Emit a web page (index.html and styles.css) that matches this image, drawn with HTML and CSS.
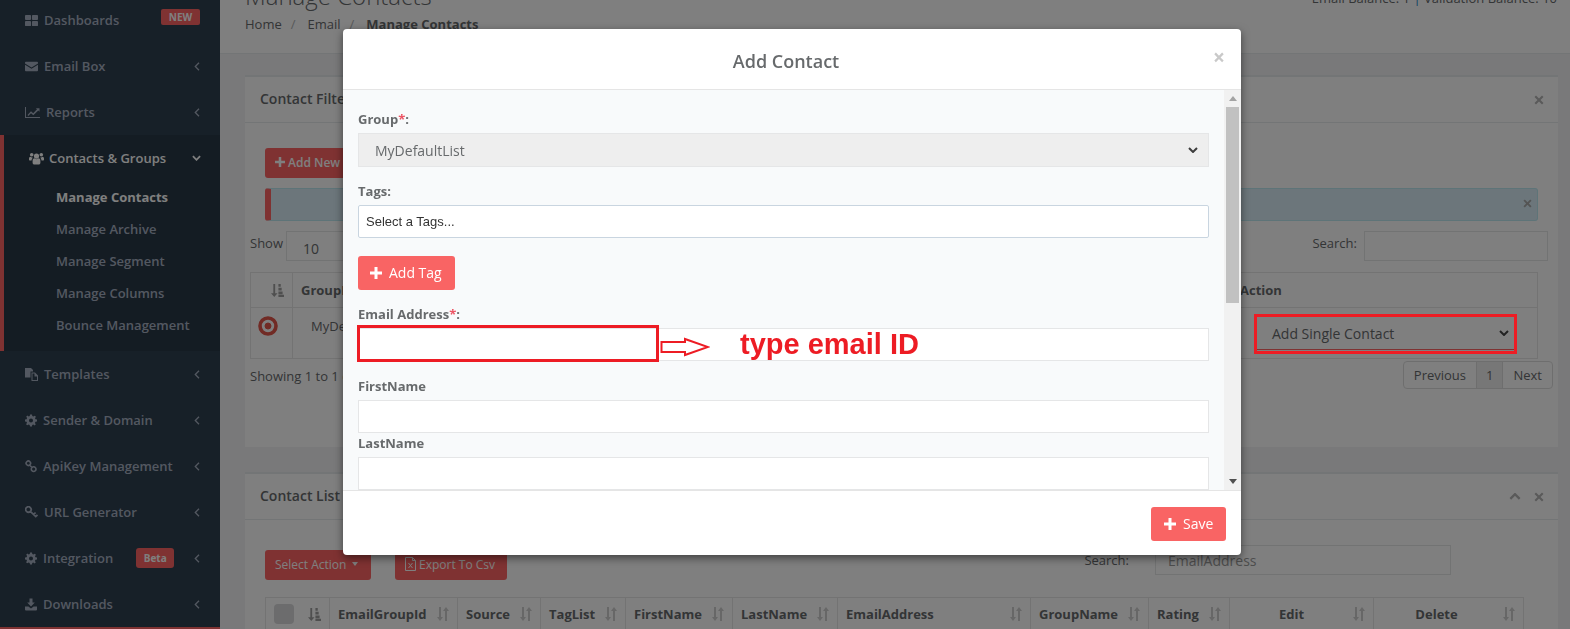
FILE: index.html
```html
<!DOCTYPE html>
<html lang="en">
<head>
<meta charset="utf-8">
<title>Manage Contacts</title>
<link rel="stylesheet" href="styles.css">
</head>
<body>
<svg class="defs" width="0" height="0" aria-hidden="true">
  <symbol id="i-th" viewBox="0 0 14 12"><path d="M0 1a1 1 0 0 1 1-1h4.5a1 1 0 0 1 1 1v3.4a1 1 0 0 1-1 1H1a1 1 0 0 1-1-1zM7.5 1a1 1 0 0 1 1-1H13a1 1 0 0 1 1 1v3.4a1 1 0 0 1-1 1H8.500a1 1 0 0 1-1-1zM0 7.600a1 1 0 0 1 1-1h4.500a1 1 0 0 1 1 1V11a1 1 0 0 1-1 1H1a1 1 0 0 1-1-1zM7.500 7.600a1 1 0 0 1 1-1H13a1 1 0 0 1 1 1V11a1 1 0 0 1-1 1H8.500a1 1 0 0 1-1-1z"/></symbol>
  <symbol id="i-mail" viewBox="0 0 14 10"><path d="M1 0h12a1 1 0 0 1 1 1v.7L7 6 0 1.700V1a1 1 0 0 1 1-1zM0 3.200 7 7.500l7-4.300V9a1 1 0 0 1-1 1H1a1 1 0 0 1-1-1z"/></symbol>
  <symbol id="i-chart" viewBox="0 0 15 11"><path d="M0 0h1v10h14v1H0zM2.500 8 6 4.300l2.200 2L12 2.300 10.800 1.200H14.500V4.800L13.300 3.600 8.300 8.300 6 6.300 3.300 9z"/></symbol>
  <symbol id="i-users" viewBox="0 0 15 12"><circle cx="7.500" cy="3.600" r="2.600"/><circle cx="2.700" cy="2.200" r="1.800"/><circle cx="12.300" cy="2.200" r="1.800"/><path d="M3.600 8.200c0-1.800 1-2.500 2-2.500l1.900 1 1.900-1c1 0 2 .7 2 2.500v2c0 1.200-.8 1.800-1.800 1.800H5.400c-1 0-1.800-.6-1.800-1.800zM0 6.200c0-1.200.7-1.900 1.500-1.900l1.300.6c.4 0 .7.100 1 .3C3 6 2.600 6.800 2.500 8H.9C.4 8 0 7.600 0 7zM15 6.200c0-1.200-.7-1.900-1.500-1.900l-1.300.6c-.4 0-.7.100-1 .3.800.800 1.200 1.600 1.300 2.800h1.600c.5 0 .9-.4.900-1z"/></symbol>
  <symbol id="i-files" viewBox="0 0 13 13"><path d="M0 0h6l2 2v1.500H5.500V9.500H0zM6.500 4.500H10l3 3V13H6.500zM7.500 5.500V12H12V8.500H9.500V5.500z" fill-rule="evenodd"/></symbol>
  <symbol id="i-cog" viewBox="0 0 12 12"><path fill-rule="evenodd" d="M5 0h2l.3 1.600 1.100.5L9.800 1.200l1.100 1.100-.9 1.400.5 1.100L12 5v2l-1.600.3-.5 1.100.9 1.400-1.100 1.100-1.400-.9-1.100.5L7 12H5l-.3-1.600-1.100-.5-1.400.9-1.100-1.100.9-1.400-.5-1.100L0 7V5l1.600-.3.500-1.100-.9-1.400 1.100-1.100 1.400.9 1.100-.5zM6 4a2 2 0 1 0 0 4 2 2 0 0 0 0-4z"/></symbol>
  <symbol id="i-link" viewBox="0 0 12 12"><path fill="none" stroke="currentColor" stroke-width="1.600" d="M1.800 1.200a2.200 2.200 0 0 1 3.100 0 2.200 2.200 0 0 1 0 3.100 2.200 2.200 0 0 1-3.100 0 2.200 2.200 0 0 1 0-3.100zM7 7a2.300 2.300 0 0 1 3.300 0 2.300 2.300 0 0 1 0 3.300A2.300 2.300 0 0 1 7 10.300 2.300 2.300 0 0 1 7 7zM4.500 4.500 7.300 7.300"/></symbol>
  <symbol id="i-key" viewBox="0 0 12 12"><path fill="none" stroke="currentColor" stroke-width="1.600" d="M1.400 1.400a2.500 2.500 0 0 1 3.500 0 2.500 2.500 0 0 1 0 3.500 2.500 2.500 0 0 1-3.500 0 2.500 2.500 0 0 1 0-3.500zM4.900 4.900l5.600 5.400M8 7.500l1.800-1.400M10 9.600l1.500-1.300"/></symbol>
  <symbol id="i-down" viewBox="0 0 12 12"><path d="M4.500 0h3v4h2.300L6 8 2.200 4h2.300zM0 8h3.400L6 10l2.600-2H12v3a1 1 0 0 1-1 1H1a1 1 0 0 1-1-1z"/></symbol>
  <symbol id="i-left" viewBox="0 0 6 9"><path fill="none" stroke="currentColor" stroke-width="1.300" d="M5 .8 1.300 4.500 5 8.200"/></symbol>
  <symbol id="i-chev" viewBox="0 0 10 6"><path fill="none" stroke="currentColor" stroke-width="2" d="M1 1l4 4 4-4"/></symbol>
  <symbol id="i-plus" viewBox="0 0 12 12"><path d="M4.500 0h3v4.500H12v3H7.500V12h-3V7.500H0v-3h4.500z"/></symbol>
  <symbol id="i-x" viewBox="0 0 10 10"><path d="M2 .5 5 3.500 8 .5 9.500 2l-3 3 3 3L8 9.500l-3-3-3 3L.5 8l3-3-3-3z"/></symbol>
  <symbol id="i-amount" viewBox="0 0 14 14"><path d="M2.500 0h2v10H7l-3.500 4L0 10h2.500zM8 0h2.500v3H8zM8 4h3.500v3H8zM8 8h4.500v3H8zM8 11.500h6V14H8z"/></symbol>
  <symbol id="i-sort" viewBox="0 0 12 14"><path d="M2 0h2v10h2l-3 4-3-4h2zM8 14h2V4h2L9 0 6 4h2z"/></symbol>
  <symbol id="i-xls" viewBox="0 0 11 14"><path fill="none" stroke="currentColor" d="M.5.500h7l3 3v10H.500zM7.500.500v3h3M3.500 6l4 5M7.500 6l-4 5"/></symbol>
</svg>

<div class="app">
  <aside class="sidebar">
    <nav class="nav">
      <a class="nav-item"><svg class="ico w13"><use href="#i-th"/></svg><span>Dashboards</span><b class="badge badge-new">NEW</b></a>
      <a class="nav-item"><svg class="ico w13"><use href="#i-mail"/></svg><span>Email Box</span><svg class="arrow"><use href="#i-left"/></svg></a>
      <a class="nav-item"><svg class="ico w15"><use href="#i-chart"/></svg><span>Reports</span><svg class="arrow"><use href="#i-left"/></svg></a>
      <div class="nav-group">
        <a class="nav-item nav-open"><svg class="ico w14"><use href="#i-users"/></svg><span>Contacts &amp; Groups</span><svg class="arrow-down"><use href="#i-chev"/></svg></a>
        <a class="sub sub-active">Manage Contacts</a>
        <a class="sub">Manage Archive</a>
        <a class="sub">Manage Segment</a>
        <a class="sub">Manage Columns</a>
        <a class="sub">Bounce Management</a>
      </div>
      <a class="nav-item"><svg class="ico w13"><use href="#i-files"/></svg><span>Templates</span><svg class="arrow"><use href="#i-left"/></svg></a>
      <a class="nav-item"><svg class="ico w12"><use href="#i-cog"/></svg><span>Sender &amp; Domain</span><svg class="arrow"><use href="#i-left"/></svg></a>
      <a class="nav-item"><svg class="ico w12"><use href="#i-link"/></svg><span>ApiKey Management</span><svg class="arrow"><use href="#i-left"/></svg></a>
      <a class="nav-item"><svg class="ico w13"><use href="#i-key"/></svg><span>URL Generator</span><svg class="arrow"><use href="#i-left"/></svg></a>
      <a class="nav-item"><svg class="ico w12"><use href="#i-cog"/></svg><span>Integration</span><b class="badge badge-beta">Beta</b><svg class="arrow"><use href="#i-left"/></svg></a>
      <a class="nav-item"><svg class="ico w12"><use href="#i-down"/></svg><span>Downloads</span><svg class="arrow"><use href="#i-left"/></svg></a>
      <div class="nav-next"></div>
    </nav>
  </aside>

  <main class="main">
    <header class="page-head">
      <div>
        <h1 class="title">Manage Contacts</h1>
        <ol class="crumbs"><li>Home</li><li class="sep">/</li><li>Email</li><li class="sep">/</li><li class="crumb-now">Manage Contacts</li></ol>
      </div>
      <div class="balance">Email Balance: 1 <span class="bar">|</span> Validation Balance: 10</div>
    </header>

    <section class="panel panel-first">
      <div class="panel-head"><h2>Contact Filter</h2><svg class="tool tool-x"><use href="#i-x"/></svg></div>
      <div class="panel-body">
        <button class="btn"><svg class="btn-plus"><use href="#i-plus"/></svg>Add New Contact</button>
        <div class="alert"><svg class="alert-x"><use href="#i-x"/></svg></div>
        <div class="dt">
          <div class="dt-top">
            <label class="show">Show <span class="len">10</span></label>
            <label class="search">Search: <span class="search-box"></span></label>
          </div>
          <table class="tbl tbl-one">
            <thead><tr>
              <th class="c-sort"><svg class="sort-a"><use href="#i-amount"/></svg></th>
              <th class="c-group">GroupName</th>
              <th class="c-action">Action</th>
            </tr></thead>
            <tbody><tr>
              <td class="c-sort"><svg class="target" viewBox="0 0 20 20"><circle cx="10" cy="10" r="8" fill="none" stroke-width="3.600"/><circle cx="10" cy="10" r="3"/></svg></td>
              <td class="c-group-val">MyDefaultList</td>
              <td class="c-select"><div class="fake-select"><span>Add Single Contact</span><svg class="chev"><use href="#i-chev"/></svg></div></td>
            </tr></tbody>
          </table>
          <div class="dt-foot">
            <span>Showing 1 to 1 of 1 entries</span>
            <div class="pager"><span>Previous</span><span class="pager-now">1</span><span>Next</span></div>
          </div>
        </div>
      </div>
    </section>

    <section class="panel panel-second">
      <div class="panel-head"><h2>Contact List</h2><svg class="tool tool-up"><use href="#i-chev"/></svg><svg class="tool tool-x"><use href="#i-x"/></svg></div>
      <div class="panel-body">
        <div class="toolbar">
          <button class="btn btn-action">Select Action <i class="caret"></i></button>
          <button class="btn btn-export"><svg class="xls"><use href="#i-xls"/></svg>Export To Csv</button>
          <label class="search2">Search: <span class="search2-box">EmailAddress</span></label>
        </div>
        <table class="tbl tbl-two">
          <thead><tr>
            <th class="w-check"><div class="th-in"><i class="check"></i><svg class="sort-a"><use href="#i-amount"/></svg></div></th>
            <th class="w-id"><div class="th-in"><span>EmailGroupId</span><svg class="sort"><use href="#i-sort"/></svg></div></th>
            <th class="w-source"><div class="th-in"><span>Source</span><svg class="sort"><use href="#i-sort"/></svg></div></th>
            <th class="w-tag"><div class="th-in"><span>TagList</span><svg class="sort"><use href="#i-sort"/></svg></div></th>
            <th class="w-first"><div class="th-in"><span>FirstName</span><svg class="sort"><use href="#i-sort"/></svg></div></th>
            <th class="w-last"><div class="th-in"><span>LastName</span><svg class="sort"><use href="#i-sort"/></svg></div></th>
            <th class="w-email"><div class="th-in"><span>EmailAddress</span><svg class="sort"><use href="#i-sort"/></svg></div></th>
            <th class="w-gname"><div class="th-in"><span>GroupName</span><svg class="sort"><use href="#i-sort"/></svg></div></th>
            <th class="w-rating"><div class="th-in"><span>Rating</span><svg class="sort"><use href="#i-sort"/></svg></div></th>
            <th class="w-edit"><div class="th-in th-mid"><span>Edit</span><svg class="sort"><use href="#i-sort"/></svg></div></th>
            <th class="w-delete"><div class="th-in th-mid"><span>Delete</span><svg class="sort"><use href="#i-sort"/></svg></div></th>
          </tr></thead>
        </table>
      </div>
    </section>
  </main>
</div>

<div class="backdrop"></div>

<div class="modal" role="dialog">
  <div class="modal-head"><h3>Add Contact</h3><span class="close">&times;</span></div>
  <div class="modal-body">
    <form class="form">
      <label class="lbl">Group<em>*</em>:</label>
      <div class="fake-input is-disabled"><span>MyDefaultList</span><svg class="chev"><use href="#i-chev"/></svg></div>
      <label class="lbl lbl-tags">Tags:</label>
      <div class="fake-input tags-input">Select a Tags...</div>
      <button type="button" class="btn-solid btn-tag"><svg class="plus"><use href="#i-plus"/></svg>Add Tag</button>
      <label class="lbl lbl-email">Email Address<em>*</em>:</label>
      <input class="field" type="text">
      <label class="lbl lbl-first">FirstName</label>
      <input class="field field-first" type="text">
      <label class="lbl lbl-last">LastName</label>
      <input class="field" type="text">
    </form>
    <div class="scrollbar">
      <div class="sb-btn"><i class="sb-up"></i></div>
      <div class="sb-track"><div class="sb-thumb"></div></div>
      <div class="sb-btn"><i class="sb-down"></i></div>
    </div>
  </div>
  <div class="modal-foot"><button type="button" class="btn-solid btn-save"><svg class="plus"><use href="#i-plus"/></svg>Save</button></div>
</div>

<div class="note note-email"></div>
<svg class="note-arrow" viewBox="0 0 50 20"><path d="M1.500 5H25V2l23 8-23 8v-3H1.500z"/></svg>
<div class="note-text">type email ID</div>
<div class="note note-action"></div>
</body>
</html>
```

FILE: styles.css
```css
* { box-sizing: border-box; }
html, body { margin: 0; height: 629px; overflow: hidden; }
body { font-family: "Open Sans", "Liberation Sans", sans-serif; font-size: 13px; color: #676a6c; background: #f3f3f4; }
.defs { position: absolute; }
.app { display: flex; height: 629px; overflow: hidden; }

/* sidebar */
.sidebar { width: 220px; flex: none; background: #2f4050; height: 629px; overflow: hidden; }
.nav { margin-top: -3px; display: flex; flex-direction: column; }
.nav-item { display: flex; align-items: center; height: 46px; padding-left: 25px; padding-right: 20px; color: #a7b1c2; font-weight: 600; font-size: 13px; }
.ico { height: 13px; fill: currentColor; margin-right: 6px; flex: none; overflow: visible; }
.w12 { width: 12px; }
.w13 { width: 13px; }
.w14 { width: 14px; }
.w15 { width: 15px; }
.arrow { width: 6px; height: 9px; margin-left: auto; color: #a7b1c2; flex: none; }
.arrow-down { width: 9px; height: 6px; margin-left: auto; flex: none; }
.badge { font-size: 10px; font-weight: 700; color: #fff; background: #ff6565; border-radius: 2px; display: flex; align-items: center; justify-content: center; }
.badge-new { width: 39px; height: 16px; margin-left: auto; margin-top: -6px; }
.badge-beta { width: 38px; height: 20px; margin-left: 23px; border-radius: 3px; }
.nav-group { background: #293846; border-left: 4px solid #ff6565; height: 216px; }
.nav-open { color: #fff; padding-right: 19px; }
.nav-open .ico { width: 15px; margin-right: 5px; }
.sub { display: block; height: 32px; line-height: 32px; padding-left: 52px; color: #a7b1c2; font-weight: 600; }
.sub-active { color: #fff; font-weight: 700; }
.nav-next { border-top: 2px solid #ff6565; height: 10px; }

/* page */
.main { flex: 1; min-width: 0; }
.page-head { margin-top: -19px; background: #fff; border-bottom: 1px solid #e7eaec; padding: 0 13px 19px 25px; display: flex; justify-content: space-between; height: 73px; }
.title { margin: 0; font-size: 24px; font-weight: 300; line-height: 30px; }
.crumbs { list-style: none; margin: 3px 0 0; padding: 0; display: flex; line-height: 20px; gap: 9px; }
.sep { color: #b0b2b4; margin-right: 3px; }
.crumb-now { font-weight: 700; }
.balance { margin-top: 7px; line-height: 20px; }
.bar { color: #1c84c6; }

.panel { margin: 0 12px 0 25px; background: #fff; border-top: 2px solid #e7eaec; }
.panel-first { margin-top: 21px; height: 372px; }
.panel-second { margin-top: 25px; }
.panel-head { height: 46px; border-bottom: 1px solid #e7eaec; display: flex; align-items: center; padding: 0 14px 0 15px; }
.panel-head h2 { margin: 0 auto 0 0; font-size: 14px; font-weight: 600; position: relative; top: -1px; }
.tool { fill: currentColor; color: #b4b4b4; }
.tool-x { width: 10px; height: 10px; margin-left: 13px; }
.tool-up { width: 12px; height: 7px; transform: rotate(180deg); }
.panel-body { padding: 25px 20px 0; }
.btn { display: flex; align-items: center; height: 30px; padding: 0 10px 2px; border: 0; border-radius: 3px; background: #ff6565; color: #fff; font: 600 12px "Open Sans", sans-serif; }
.btn-plus { width: 10px; height: 10px; fill: #fff; margin-right: 3px; }
.alert { position: relative; height: 33px; margin-top: 10px; background: #d9edf7; border: 1px solid #bce8f1; border-left: 6px solid #ff6565; border-radius: 3px; }
.alert-x { position: absolute; right: 5px; top: 10px; width: 9px; height: 9px; fill: #a8a8a8; }
.dt { margin: 10px -15px 0; }
.dt-top { display: flex; justify-content: space-between; height: 30px; padding-right: 5px; }
.show, .search { display: flex; align-items: flex-start; line-height: 25px; }
.show { gap: 3px; }
.len { display: block; width: 190px; height: 30px; line-height: 33px; border: 1px solid #e5e6e7; padding-left: 16px; font-size: 14px; }
.search { gap: 7px; }
.search-box { display: block; width: 184px; height: 30px; border: 1px solid #e5e6e7; background: #fff; }
.tbl { border-collapse: collapse; table-layout: fixed; }
.tbl th, .tbl td { border: 1px solid #e7e7e7; padding: 0; }
.tbl-one { width: 1288px; margin-top: 11px; }
.tbl-one thead tr { height: 35px; }
.tbl-one tbody tr { height: 51px; }
.tbl-one th { font-size: 13px; font-weight: 700; text-align: left; padding-left: 8px; }
.tbl-one td { vertical-align: top; padding-top: 8px; }
.c-sort { width: 42px; text-align: center; }
.tbl-one th.c-sort { padding-left: 20px; }
.tbl-one th.c-action { width: 308px; padding-left: 10px; }
.tbl-one .c-group-val { padding-left: 18px; line-height: 20px; }
.sort-a { width: 13px; height: 13px; fill: #9f9f9f; display: block; }
.target { width: 20px; height: 20px; stroke: #e3564a; fill: #e3564a; display: block; margin: 0 auto 0 7px; }
.tbl-one .c-select { padding: 9px 0 0 26px; }
.fake-select { display: flex; align-items: center; justify-content: space-between; width: 259px; height: 33px; padding: 0 6px 0 16px; font-size: 14px; border-bottom: 1px solid #ff6565; }
.chev { width: 10px; height: 6px; color: #444; flex: none; }
.dt-foot { display: flex; justify-content: space-between; align-items: flex-start; margin-top: 2px; line-height: 30px; }
.pager { display: flex; height: 28px; border: 1px solid #dddddd; border-radius: 4px; line-height: 26px; }
.pager span { padding: 0 10px; border-left: 1px solid #dddddd; }
.pager span:first-child { border-left: 0; }
.pager .pager-now { background: #eeeeee; padding: 0 9px; }

.toolbar { display: flex; align-items: flex-start; height: 52px; }
.btn-action { margin-top: 5px; width: 106px; font-weight: 400; padding-left: 10px; }
.btn-export { margin-top: 5px; margin-left: 24px; width: 112px; font-weight: 400; }
.caret { width: 0; height: 0; margin-left: 6px; border-left: 3.500px solid transparent; border-right: 3.500px solid transparent; border-top: 4px solid #fff; }
.xls { width: 11px; height: 14px; margin-right: 3px; flex: none; color: #fff; }
.search2 { margin-left: auto; margin-right: 87px; display: flex; align-items: center; gap: 26px; height: 30px; }
.search2-box { display: block; width: 296px; height: 30px; line-height: 30px; border: 1px solid #e5e6e7; padding-left: 12px; color: #9a9a9a; font-size: 14px; }
.tbl-two { width: 1258px; }
.tbl-two thead tr { height: 33px; }
.tbl-two th { font-size: 13px; font-weight: 700; text-align: left; }
.th-in { display: flex; align-items: center; justify-content: space-between; padding: 0 8px 0 8px; }
.th-mid span { flex: 1; text-align: center; padding: 0 10px 0 2px; }
.w-delete .th-mid span { padding-right: 14px; }
.check { display: block; width: 20px; height: 20px; border-radius: 4px; background: #d8d9da; }
.sort { width: 12px; height: 14px; fill: #cfcfcf; flex: none; }
.w-check { width: 64px; }
.w-id { width: 128px; }
.w-source { width: 83px; }
.w-tag { width: 85px; }
.w-first { width: 107px; }
.w-last { width: 105px; }
.w-email { width: 193px; }
.w-gname { width: 118px; }
.w-rating { width: 81px; }
.w-edit { width: 144px; }
.w-delete { width: 150px; }

/* modal */
.backdrop { position: fixed; inset: 0; background: rgba(0, 0, 0, .5); }
.modal { position: absolute; left: 343px; top: 29px; width: 898px; height: 526px; background: #fff; border-radius: 4px; box-shadow: 0 3px 9px rgba(0, 0, 0, .5); display: flex; flex-direction: column; overflow: hidden; }
.modal-head { position: relative; flex: none; height: 61px; border-bottom: 1px solid #e5e5e5; display: flex; align-items: center; justify-content: center; padding-right: 12px; }
.modal-head h3 { margin: 0; font-size: 18px; font-weight: 600; color: #676a6c; position: relative; top: 2px; }
.close { position: absolute; right: 16px; top: 15px; font-size: 21px; line-height: 26px; font-weight: 700; color: #c9c9c9; }
.modal-body { flex: none; height: 400px; background: #f8fafb; display: flex; }
.form { flex: 1; min-width: 0; overflow: hidden; padding: 19px 15px 0; }
.scrollbar { flex: none; width: 17px; background: #f1f1f1; display: flex; flex-direction: column; }
.sb-btn { flex: none; height: 17px; display: flex; align-items: center; justify-content: center; }
.sb-up { border-left: 4.500px solid transparent; border-right: 4.500px solid transparent; border-bottom: 5px solid #a3a3a3; }
.sb-down { border-left: 4.500px solid transparent; border-right: 4.500px solid transparent; border-top: 5px solid #505050; }
.sb-track { flex: 1; padding: 0 2px; }
.sb-thumb { height: 196px; background: #c1c1c1; }
.lbl { display: block; font-weight: 700; font-size: 13px; line-height: 20px; }
.lbl em { font-style: normal; color: #ed5565; }
.fake-input { display: flex; align-items: center; width: 100%; margin-top: 4px; height: 34px; border: 1px solid #e5e6e7; background: #fff; }
.is-disabled { background: #eeeeee; justify-content: space-between; padding: 0 10px 0 16px; font-size: 14px; }
.is-disabled .chev { color: #3d3d3d; }
.lbl-tags { margin-top: 14px; }
.tags-input { margin-top: 4px; height: 33px; border: 1px solid #c9d5e0; border-radius: 2px; padding-left: 7px; font: 13px "Liberation Sans", Arial, sans-serif; color: #333; }
.btn-solid { display: flex; align-items: center; border: 0; border-radius: 3px; background: #f96464; color: #fff; font: 14px "Open Sans", sans-serif; height: 34px; padding-bottom: 2px; }
.plus { width: 12px; height: 12px; fill: #fff; margin-right: 7px; }
.btn-tag { margin-top: 18px; width: 97px; padding-left: 12px; }
.lbl-email { margin-top: 14px; }
.field { display: block; width: 100%; height: 33px; margin-top: 4px; border: 1px solid #e5e6e7; background: #fff; padding: 0; }
.lbl-first { margin-top: 15px; }
.lbl-last { margin-top: 0; }
.modal-foot { flex: 1; border-top: 1px solid #e5e5e5; display: flex; justify-content: flex-end; padding: 16px 15px 0; }
.btn-save { width: 75px; padding-left: 13px; }

/* annotations */
.note { position: absolute; border: 3px solid #ed1c24; }
.note-email { left: 357px; top: 325px; width: 302px; height: 37px; }
.note-action { left: 1254px; top: 314px; width: 263px; height: 40px; }
.note-arrow { position: absolute; left: 660px; top: 337px; width: 50px; height: 20px; fill: #fff; stroke: #ed1c24; stroke-width: 2; }
.note-text { position: absolute; left: 740px; top: 326px; font: 700 29px/36px "Liberation Sans", Arial, sans-serif; color: #ed1c24; white-space: nowrap; }
```
